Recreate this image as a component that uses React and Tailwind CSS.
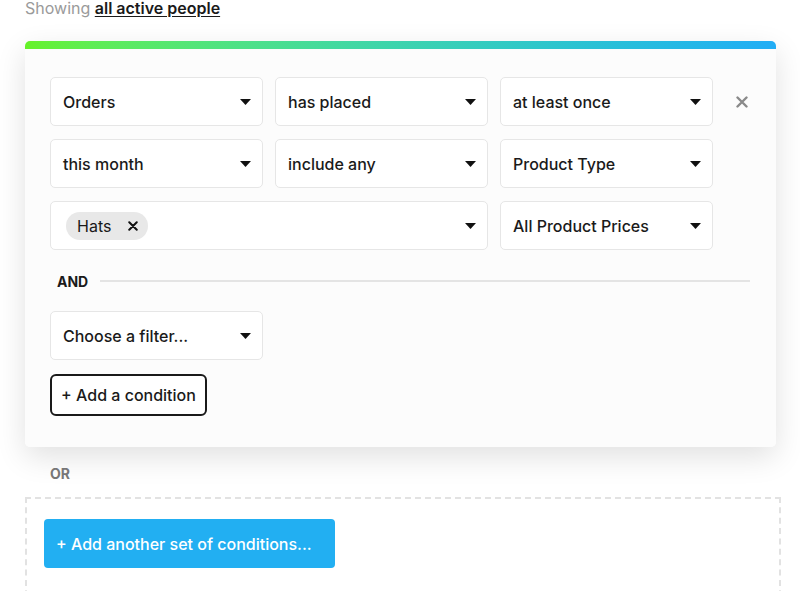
function Caret() {
    return (
        <svg width="11" height="6" viewBox="0 0 11 6" className="shrink-0">
            <path d="M0 0 L11 0 L5.5 6 Z" fill="#111" />
        </svg>
    );
}

function XIcon({ size = 12, color = "#111" }) {
    return (
        <svg width={size} height={size} viewBox="0 0 12 12">
            <path d="M1.5 1.5 L10.5 10.5 M10.5 1.5 L1.5 10.5" stroke={color} strokeWidth="2.4" strokeLinecap="round" />
        </svg>
    );
}

function Select({ label }) {
    return (
        <div className="h-[49px] w-[213px] shrink-0 bg-white border border-[#e6e6e6] rounded-[5px] flex items-center justify-between pl-[12px] pr-[11px]">
            <span className="text-[16px] font-medium text-[#1a1a1a]">
                {label}
            </span>
            <Caret />
        </div>
    );
}

export default function App() {

    return (

        <div className="w-[800px] h-[591px] overflow-hidden bg-white px-[25px] font-['Inter',sans-serif]">

            {/* HEADER */}
            <p className="-mt-[4px] leading-[24px] text-[16px] text-[#9a9a9a]">
                Showing{" "}
                <span className="font-semibold text-[#1a1a1a] underline underline-offset-2">
                    all active people
                </span>
            </p>

            {/* CARD */}
            <div className="mt-[21px] w-[751px] shadow-[0_10px_30px_rgba(0,0,0,0.12)] rounded-[5px]">

                <div className="h-[8px] rounded-t-[5px] bg-gradient-to-r from-[#66f227] to-[#22adf6]" />

                <div className="bg-[#fcfcfc] rounded-b-[5px] px-[25px] pt-[28px] pb-[31px]">

                    <div className="flex flex-col gap-[13px]">

                        <div className="flex items-center gap-[12px]">
                            <Select label="Orders" />
                            <Select label="has placed" />
                            <Select label="at least once" />
                            <div className="ml-[11px] shrink-0">
                                <XIcon size={12} color="#8a8a8a" />
                            </div>
                        </div>

                        <div className="flex items-center gap-[12px]">
                            <Select label="this month" />
                            <Select label="include any" />
                            <Select label="Product Type" />
                        </div>

                        <div className="flex items-center gap-[12px]">
                            <div className="h-[49px] w-[438px] shrink-0 bg-white border border-[#e6e6e6] rounded-[5px] flex items-center justify-between pl-[15px] pr-[11px]">
                                <div className="h-[28px] bg-[#e8e8e8] rounded-full flex items-center pl-[11px] pr-[10px] gap-[17px]">
                                    <span className="text-[16px] text-[#1a1a1a]">
                                        Hats
                                    </span>
                                    <XIcon size={10} color="#111" />
                                </div>
                                <Caret />
                            </div>
                            <Select label="All Product Prices" />
                        </div>

                    </div>

                    {/* AND */}
                    <div className="flex items-center gap-[12px] mt-[21px] h-[20px] pl-[7px] pr-[1px]">
                        <span className="text-[14px] font-bold text-[#1a1a1a]">
                            AND
                        </span>
                        <div className="flex-1 h-[2px] bg-[#e4e4e4]" />
                    </div>

                    <div className="mt-[20px]">
                        <Select label="Choose a filter..." />
                    </div>

                    <button className="mt-[14px] h-[42px] w-[157px] border-2 border-[#1a1a1a] rounded-[6px] bg-white text-[16px] font-medium text-[#1a1a1a] flex items-center justify-center">
                        + Add a condition
                    </button>

                </div>

            </div>

            {/* OR */}
            <p className="mt-[17px] ml-[25px] text-[14px] font-bold text-[#777] leading-[20px]">
                OR
            </p>

            <div className="mt-[13px] w-[756px] h-[120px] border-2 border-dashed border-[#e2e2e2] pl-[17px] pt-[20px]">
                <button className="h-[49px] w-[291px] bg-[#22aff2] rounded-[4px] text-white text-[16px] font-medium text-left pl-[12px]">
                    + Add another set of conditions...
                </button>
            </div>

        </div>
    );
}
